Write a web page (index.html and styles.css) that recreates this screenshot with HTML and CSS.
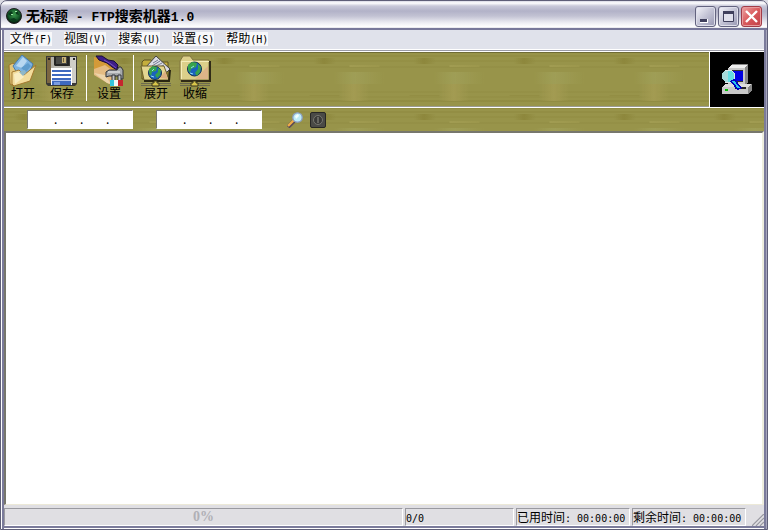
FILE: index.html
```
<!DOCTYPE html>
<html lang="zh-CN">

<head>
    <meta charset="UTF-8">
    <meta name="viewport" content="width=device-width, initial-scale=1.0">
    <title>无标题 - FTP搜索机器1.0</title>
    <link rel="stylesheet" href="styles.css">
</head>

<body>
    <div class="window">
        <header class="titlebar">
            <svg class="app-icon" viewBox="0 0 16 16">
                <defs>
                    <radialGradient id="ball" cx="50%" cy="40%" r="60%">
                        <stop offset="0" stop-color="#3c9a4c"/>
                        <stop offset="0.6" stop-color="#155a2a"/>
                        <stop offset="1" stop-color="#031008"/>
                    </radialGradient>
                </defs>
                <circle cx="8" cy="8" r="7.5" fill="url(#ball)" stroke="#222"/>
                <path d="M2 6l3-3 2 2-2 3zM10 3l2 1 1 3-3-1zM4 11l4-1 3 2-3 2z" fill="#0a3a1c"/>
                <path d="M9 3h2v1H9zM5 6h2v1H5z" fill="#9be8a2"/>
            </svg>
            <h1 class="title">无标题<span class="latin"> - FTP</span>搜索机器<span class="latin">1.0</span></h1>
            <button class="win-btn" aria-label="最小化">
                <svg viewBox="0 0 19 19"><path d="M4 12h8v4H4z" fill="#fff"/><path d="M4 12h7v3H4z" fill="#3f3f5c"/></svg>
            </button>
            <button class="win-btn" aria-label="最大化">
                <svg viewBox="0 0 19 19"><path d="M4.500 4.500h10v10h-10z" fill="#e0e0ec" stroke="#3f3f5c"/><path d="M4 4h11v3H4z" fill="#3f3f5c"/></svg>
            </button>
            <button class="win-btn close" aria-label="关闭">
                <svg viewBox="0 0 19 19"><path d="M4 4l11 11M15 4L4 15" stroke="#fff" stroke-width="2.4"/></svg>
            </button>
        </header>

        <nav class="menubar">
            <button class="menu">文件<span class="latin">(F)</span></button>
            <button class="menu">视图<span class="latin">(V)</span></button>
            <button class="menu">搜索<span class="latin">(U)</span></button>
            <button class="menu">设置<span class="latin">(S)</span></button>
            <button class="menu">帮助<span class="latin">(H)</span></button>
        </nav>

        <div class="toolbar wood">
            <button class="tool">
                <svg viewBox="0 0 32 32">
                    <path d="M2 10l4-2 3 2 3 1v17l-5 3-4-2z" fill="#e2c67c" stroke="#9a742b"/>
                    <path d="M6 11L15 0l11 9-4 10-10 2z" fill="#7db3e0" stroke="#477aac"/>
                    <path d="M9 11l7-9 4 4-5 7z" fill="#b8d8f1"/>
                    <path d="M14 13l7-5 3 3-5 6z" fill="#5f9ccc"/>
                    <path d="M5 17l7-2 5 5 12-10-6 16L7 31l-2-2z" fill="#f2dc9c" stroke="#a47a30"/>
                    <path d="M7 19l5-2 5 5-9 7z" fill="#f9edc2"/>
                    <path d="M12 17l6-2 1 3-3 3z" fill="#8fb8c8"/>
                </svg>
                <span>打开</span>
            </button>
            <button class="tool">
                <svg viewBox="0 0 32 32">
                    <path d="M0 1h31v28l-2 2H2l-2-2z" fill="#3a3a36"/>
                    <path d="M1 2h4v26H1z" fill="#7b6642"/>
                    <path d="M5 2h4v26H5z" fill="#b3b0a6"/>
                    <path d="M24 2h6v26h-6z" fill="#cfcec8"/>
                    <path d="M8 11h17v3H8z" fill="#bcbab2"/>
                    <path d="M8 1h15v9l-1 1H9l-1-1z" fill="#252523"/>
                    <path d="M10 2h11v7H10z" fill="#4a4a46"/>
                    <path d="M16 2h4v6h-4z" fill="#c8b378"/>
                    <path d="M17 3h1v4h-1z" fill="#6d5f38"/>
                    <path d="M5 13h21v17H5z" fill="#fff"/>
                    <path d="M6 15h19v2H6zM6 19h19v2H6zM6 23h19v7H6z" fill="#3e69bf"/>
                    <path d="M6 25h19v1H6z" fill="#b9caf0"/>
                    <path d="M8 27h6v3H8z" fill="#7a9ce0"/>
                    <path d="M2 3h2v2H2zM27 3h2v2h-2z" fill="#222"/>
                </svg>
                <span>保存</span>
            </button>
            <span class="separator"></span>
            <button class="tool">
                <svg viewBox="0 0 32 32">
                    <path d="M1 2l4 1 18 10-3 7-8 2-11-4z" fill="#d49a38"/>
                    <path d="M1 14l11-4 8 6v13h-4L1 20z" fill="#e4bb82"/>
                    <path d="M1 18l11 2 6 9-4-1z" fill="#ecd4aa"/>
                    <path d="M3 1h6l6 4 6 1 4 4-1 5-5-3-5-4-8-3z" fill="#3d1d86" stroke="#180c36"/>
                    <path d="M11 5l7 4 5 4" fill="none" stroke="#7652c2"/>
                    <path d="M13 17l3-2h8l2-3h2l2 3v9h-2l-2-3H16l-3 1z" fill="#a6a9ac" stroke="#303338"/>
                    <path d="M15 17h12" stroke="#f2f2f2"/>
                    <path d="M19 20h3v6h-3zM25 20h3v6h-3z" fill="#c0c4c6" stroke="#303338"/>
                    <path d="M17 25h4v6h-4z" fill="#35c4dc"/>
                    <path d="M21 25h4v6h-4z" fill="#eef7f7"/>
                    <path d="M25 25h5v6h-5z" fill="#c5262e"/>
                </svg>
                <span>设置</span>
            </button>
            <span class="separator"></span>
            <button class="tool">
                <svg viewBox="0 0 32 32">
                    <path d="M2 24V7l2-2h7l2 2h15v17z" fill="#c5ae3c" stroke="#5d5220"/>
                    <path d="M6 12L16 1l14 13-3 3H8z" fill="#dcdce4" stroke="#444"/>
                    <path d="M13 8l5-3M12 11l8-5M14 12l8-4M18 13l6-3" stroke="#777c94"/>
                    <path d="M1 11h23l5 14H4z" fill="#e4d690" stroke="#6c602b"/>
                    <path d="M20 23l5-7 3 8z" fill="#dcae80"/>
                    <path d="M4 26h25l1-11" fill="none" stroke="#292612" stroke-width="2"/>
                    <circle cx="15" cy="18" r="6.500" fill="#1a62bd" stroke="#123252"/>
                    <path d="M9 14l4-3 4 1-1 4-4 1-1 4-2-3zM18 13l3 2-1 5-3 3-2-3 3-3z" fill="#37a34c"/>
                    <path d="M12 16l2-2M11 21l3 1" stroke="#8cdcf2"/>
                    <path d="M1 28.500h30M1 30.500h30" stroke="#6d6b4f"/>
                    <path d="M14 26h3v2h2v3h-7v-3h2z" fill="#d9c64b" stroke="#39351b"/>
                </svg>
                <span>展开</span>
            </button>
            <button class="tool">
                <svg viewBox="0 0 32 32">
                    <path d="M1 25V6l3-5h7l3 4h16v20z" fill="#dccf8a" stroke="#827641"/>
                    <path d="M2 6.500h28M2.500 7v17" stroke="#f5edb9"/>
                    <path d="M2 26h29V6" fill="none" stroke="#302b17" stroke-width="2"/>
                    <path d="M16 24l13-13v13z" fill="#dcb488"/>
                    <circle cx="15.500" cy="14" r="7" fill="#1a62bd" stroke="#123252"/>
                    <path d="M9 10l4-3 5 1-1 4-5 2-1 4-2-3zM19 9l3 3-1 5-3 4-2-3 3-4z" fill="#37a34c"/>
                    <path d="M12 13l3-2M11 18l3 1" stroke="#8cdcf2"/>
                    <path d="M1 28.500h30M1 30.500h30" stroke="#6d6b4f"/>
                    <path d="M14 26h3v2h2v3h-7v-3h2z" fill="#d9c64b" stroke="#39351b"/>
                </svg>
                <span>收缩</span>
            </button>
            <div class="logo">
                <svg viewBox="0 0 32 32" shape-rendering="crispEdges">
                    <path d="M7 4l4-4h16v18l-3 3H7z" fill="#888"/>
                    <path d="M7 4h17v17H7z" fill="#c8c8c8"/>
                    <path d="M7 4l4-3h15l-2 3z" fill="#eee"/>
                    <path d="M10 6h12v12H10z" fill="#333"/>
                    <path d="M11 7h11v10H11z" fill="#0000e0"/>
                    <path d="M1 23l3-3h27v6l-4 4H1z" fill="#888"/>
                    <path d="M1 23h26v7H1z" fill="#c8c8c8"/>
                    <path d="M1 23h26l3-3H4z" fill="#ddd"/>
                    <path d="M14 23h11v2H14z" fill="#222"/>
                    <path d="M4 25h3v2H4z" fill="#00c000"/>
                    <path d="M4 6h6l3 3v6l-3 3H4l-3-3V9z" fill="#65dce2"/>
                    <path d="M4 6h3v12H4l-3-3V9z" fill="#a8dada"/>
                    <path d="M4 6h6l3 3v6l-3 3H4" fill="none" stroke="#dfe8e8"/>
                    <path d="M11 16l8 9" stroke="#0000c0" stroke-width="5"/>
                    <path d="M12 17l6 7" stroke="#28c4ee" stroke-width="2"/>
                </svg>
            </div>
        </div>

        <div class="searchbar wood">
            <div class="ip" role="group" aria-label="起始地址">
                <input aria-label="起始 1"><span>.</span><input aria-label="起始 2"><span>.</span><input aria-label="起始 3"><span>.</span><input aria-label="起始 4">
            </div>
            <div class="ip" role="group" aria-label="结束地址">
                <input aria-label="结束 1"><span>.</span><input aria-label="结束 2"><span>.</span><input aria-label="结束 3"><span>.</span><input aria-label="结束 4">
            </div>
            <div class="actions">
                <button class="action" aria-label="搜索">
                    <svg viewBox="0 0 16 16">
                        <path d="M1 15l6-6" stroke="#594a58" stroke-width="4"/>
                        <path d="M1 14l6-6" stroke="#f0ac48" stroke-width="2.4"/>
                        <circle cx="10.500" cy="5.500" r="4.700" fill="#bdecf8" stroke="#8ba0c5" stroke-width="1.300"/>
                        <path d="M8 4l3-2 1 2-3 3z" fill="#f5ffff"/>
                    </svg>
                </button>
                <button class="action" aria-label="停止">
                    <svg viewBox="0 0 16 16">
                        <rect x="0.500" y="0.500" width="15" height="15" rx="1.500" fill="#4a4a46" stroke="#272725"/>
                        <circle cx="8" cy="8" r="4.500" fill="#3a3a38" stroke="#77776f"/>
                        <path d="M8 5v6" stroke="#77776f" stroke-width="1.500"/>
                    </svg>
                </button>
            </div>
        </div>

        <main class="results"></main>

        <footer class="statusbar">
            <div class="panel progress">0%</div>
            <div class="panel count"><span class="latin">0/0</span></div>
            <div class="panel time">已用时间<span class="latin">: 00:00:00</span></div>
            <div class="panel time">剩余时间<span class="latin">: 00:00:00</span></div>
            <svg class="grip" viewBox="0 0 12 12">
                <path d="M1 12L12 1M5 12l7-7M9 12l3-3" stroke="#fff"/>
                <path d="M0 12L12 0M4 12l8-8M8 12l4-4" stroke="#9a9aa2" stroke-width="1.400"/>
            </svg>
        </footer>
    </div>
</body>

</html>
```
FILE: styles.css
```
* {
    box-sizing: border-box;
}

body {
    margin: 0;
    background: #dcdce4;
    font-family: "Noto Sans CJK SC", sans-serif;
    font-size: 12px;
    line-height: 12px;
    color: #000;
}

button {
    margin: 0;
    padding: 0;
    border: 0;
    background: none;
    font: inherit;
    color: inherit;
}

svg {
    display: block;
}

.latin {
    font-family: "DejaVu Sans Mono", monospace;
    font-size: 10px;
    white-space: pre;
}

.window {
    display: flex;
    flex-direction: column;
    height: 100vh;
    padding: 0 3px 3px;
    border: 1px solid #5f5f78;
    border-radius: 7px 7px 0 0;
    background: #e0dfe3;
    box-shadow: inset 1px 0 #fff, inset -1px 0 #a6a6bc, inset 3px 0 #7b7b9b, inset -3px 0 #7b7b9b, inset 0 -1px #fff, inset 0 -3px #7b7b9b;
    overflow: hidden;
}

/* title bar */
.titlebar {
    display: flex;
    align-items: center;
    gap: 2px;
    height: 29px;
    margin: 0 -3px;
    padding: 3px 5px 0;
    border-bottom: 2px solid #77779a;
    background: linear-gradient(#d8d8e4, #fff 2px, #c9c9d9 5px, #b2b2c8 10px, #c2c2d3 15px, #eeeef4 22px, #fff 26px, #d6d6e0);
}

.app-icon {
    width: 16px;
    height: 16px;
}

.title {
    flex: 1;
    margin: 0;
    padding-left: 2px;
    font-size: 14px;
    line-height: 16px;
}

.title .latin {
    font-family: "Liberation Mono", monospace;
    font-size: 13px;
}

.win-btn {
    width: 21px;
    height: 21px;
    border: 1px solid #63637f;
    border-radius: 3px;
    background: linear-gradient(135deg, #f4f4fa, #c3c3d5 50%, #9898b3);
    box-shadow: inset 0 0 0 1px #dedeea;
}

.win-btn svg {
    width: 19px;
    height: 19px;
}

.win-btn.close {
    border-color: #a23c48;
    background: linear-gradient(135deg, #eda3a3, #d9595c 50%, #c04048);
    box-shadow: inset 0 0 0 1px #e79b9d;
}

/* menu */
.menubar {
    display: flex;
    align-items: center;
    gap: 12px;
    height: 21px;
    padding: 0 6px 2px;
    background: #e0e2eb;
    border-bottom: 1px solid #9a9aa5;
    box-shadow: inset 0 -1px #fff;
}

.menu {
    background: #f8f8fa;
}

/* toolbars */
.wood {
    background-color: #98944a;
    background-image:
        linear-gradient(90deg, transparent 35%, #a39b52 50%, transparent 65%),
        linear-gradient(90deg, transparent 30%, #9f9e56 50%, transparent 80%),
        linear-gradient(90deg, transparent 10%, #8d873c 20%, transparent 32%),
        linear-gradient(90deg, transparent 45%, #a19c52 46%, #9c974c 75%, transparent 76%),
        linear-gradient(90deg, transparent 5%, #938e44 6%, #938e44 35%, transparent 36%),
        linear-gradient(#8a8438, transparent 1px, transparent 3px, #8e883e 4px, transparent 5px, transparent 8px, #918c41 9px, transparent 10px, transparent 14px, #918c43 15px, transparent 16px, transparent 39px, #928d43 40px, transparent 41px, transparent 44px, #928d43 45px, transparent 46px, transparent 48px, #8b853b 49px, transparent 50px);
    background-size: 100px 17px, 100px 12px, 100px 6px, 100px 2px, 100px 1px, 100px 54px;
    background-repeat: repeat-x;
    background-position: 0 32px, 0 20px, 0 6px, 0 13px, 0 43px, 0 0;
}

.toolbar {
    display: flex;
    gap: 1px;
    border-top: 1px solid #fff;
    border-bottom: 1px solid #fff;
    box-shadow: inset 0 1px #6f6b35, inset 0 -1px #9c9c94;
}

.tool {
    display: flex;
    flex-direction: column;
    align-items: center;
    width: 38px;
    padding: 3px 0 8px;
}

.tool svg {
    width: 32px;
    height: 32px;
    flex: none;
}

.separator {
    width: 7px;
    margin: 3px 0 6px;
    background: linear-gradient(#fff, #fff) 4px 0 / 1px 100% no-repeat;
    border-right: 2px solid transparent;
}

.logo {
    display: flex;
    align-items: center;
    justify-content: center;
    width: 55px;
    margin-left: auto;
    border-left: 1px solid #fff;
    background: #000;
}

.logo svg {
    width: 32px;
    height: 32px;
}

.searchbar {
    display: flex;
    align-items: center;
    gap: 23px;
    height: 23px;
    padding: 0 23px;
}

.ip {
    display: flex;
    width: 106px;
    height: 19px;
    padding-left: 4px;
    border: 1px solid #fff;
    border-top-color: #77776d;
    border-left-color: #77776d;
    background: #fff;
}

.ip input {
    flex: 1;
    width: 0;
    min-width: 0;
    padding: 0;
    border: 0;
    background: none;
    font: inherit;
    text-align: center;
    outline: none;
}

.ip span {
    width: 4px;
    line-height: 16px;
}

.actions {
    display: flex;
    gap: 7px;
    padding-left: 2px;
}

.action svg {
    width: 16px;
    height: 16px;
}

.results {
    flex: 1;
    border-top: 2px solid #77776d;
    border-left: 2px solid #77776d;
    border-right: 2px solid #eeeede;
    border-bottom: 1px solid #ece9d8;
    background: #fff;
}

/* status bar */
.statusbar {
    display: flex;
    gap: 2px;
    height: 21px;
    padding-top: 3px;
}

.panel {
    border: 1px solid #fff;
    border-top-color: #9a9aa0;
    border-left-color: #9a9aa0;
    line-height: 16px;
    white-space: nowrap;
    overflow: hidden;
}

.progress {
    flex: 1;
    font-family: "Liberation Serif", serif;
    font-size: 14px;
    font-weight: bold;
    text-align: center;
    color: #b0b0b6;
}

.count {
    width: 109px;
}

.time {
    width: 114px;
}

.grip {
    align-self: flex-end;
    width: 12px;
    height: 12px;
    margin-left: 4px;
}
```
